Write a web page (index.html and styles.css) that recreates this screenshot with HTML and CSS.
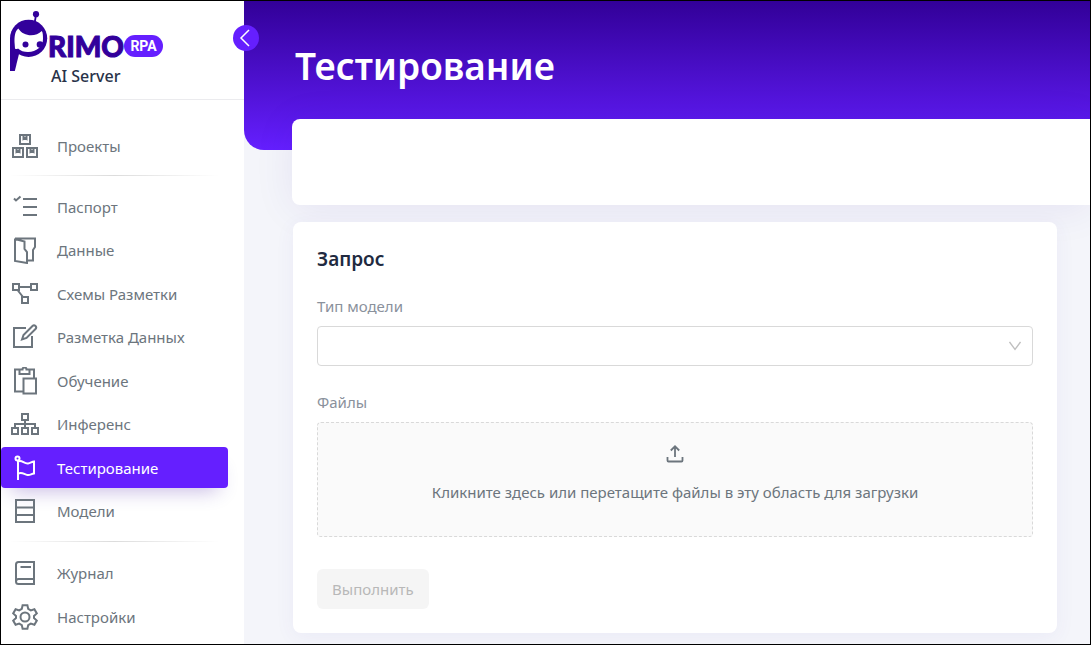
FILE: index.html
```html
<!DOCTYPE html>
<html lang="ru">
<head>
<meta charset="utf-8">
<title>Тестирование — AI Server</title>
<link rel="stylesheet" href="styles.css">
</head>
<body>
<aside class="sidebar">
  <div class="brand">
    <svg class="brand-head" viewBox="0 0 38 61" aria-hidden="true">
      <circle cx="26" cy="3.2" r="3.1" fill="#32009b"/>
      <path d="M26 4 24.6 12" stroke="#32009b" stroke-width="1.8"/>
      <circle cx="18.6" cy="27.300" r="18.6" fill="#32009b"/>
      <path d="M0 27V60H4.800L9.500 41Z" fill="#32009b"/>
      <path d="M8.300 17.500C4.800 20.500 4.500 25 4.500 31L5 37.500C6 38.500 7 38 8 37.500C10.500 40 14 41 18 41C26.500 41 33 35.500 33 28C33 24.500 33 22 31.800 20C26 26 13.500 26 8.300 17.500Z" fill="#fff"/>
      <circle cx="15.500" cy="33.500" r="3" fill="#32009b"/>
      <circle cx="30" cy="33.500" r="3.300" fill="#32009b"/>
    </svg>
    <div class="brand-text">
      <div class="brand-row"><span class="brand-name">RIMO</span><span class="brand-badge">RPA</span></div>
      <div class="brand-sub">AI Server</div>
    </div>
  </div>
  <button class="collapse" type="button" aria-label="Свернуть меню">
    <svg viewBox="0 0 26 26"><path d="M16 5 8 13l8 8"/></svg>
  </button>
  <nav class="nav">
    <div class="group">
      <a class="item" href="#"><svg class="icon" viewBox="0 0 28 28"><path d="M9 3h10v9H9zM2 16h10v9H2zM16 16h10v9H16zM12.500 3v4l1.500-1 1.500 1V3M5.500 16v4L7 19l1.500 1v-4M19.500 16v4l1.500-1 1.500 1v-4"/></svg>Проекты</a>
    </div>
    <hr class="rule">
    <div class="group group-main">
      <a class="item" href="#"><svg class="icon" viewBox="0 0 28 28"><path d="M3 5.500 5 7.500 9.500 3.500M12 6h14M12 14h14M12 22h14"/></svg>Паспорт</a>
      <a class="item" href="#"><svg class="icon" viewBox="0 0 28 28"><path d="M4 2.500h20v8.500l-2 3v10.500h-6M4 2.500v22.500l12 2v-11l-2.500-3V5.500L4 3"/></svg>Данные</a>
      <a class="item" href="#"><svg class="icon" viewBox="0 0 28 28"><path d="M2 4h6v6H2zM20 4h6v6h-6zM11 17h6v6h-6zM8 7h12M6.500 10l5.500 7"/></svg>Схемы Разметки</a>
      <a class="item" href="#"><svg class="icon" viewBox="0 0 28 28"><path d="M15 5H3v19h18V13M11 16.500l1.500-4.500 9-9q1.500-1.500 3 0t0 3l-9 9z"/></svg>Разметка Данных</a>
      <a class="item" href="#"><svg class="icon" viewBox="0 0 28 28"><path d="M12 24.500H4v-22h4.500M18.500 2.500H23v9M8.500 2.500V7h10V2.500h-3a2 2 0 0 0-4 0zM12.500 11.500H25v15H12.500z"/></svg>Обучение</a>
      <a class="item" href="#"><svg class="icon" viewBox="0 0 28 28"><path d="M11 4h6v6h-6zM1 18h6v6H1zM11 18h6v6h-6zM21 18h6v6h-6zM14 10v8M4 18v-4h20v4"/></svg>Инференс</a>
      <a class="item item-active" href="#" aria-current="page"><svg class="icon" viewBox="0 0 28 28"><circle cx="6.500" cy="4.500" r="2"/><path d="M7 6.500V26M7 7.500c4-2 6 2.500 10 2 2.500-.3 4-2 6-2v12c-3 .5-4 2-6.500 1.500-3.500-.5-5-3.500-9.500-1.500"/></svg>Тестирование</a>
      <a class="item" href="#"><svg class="icon" viewBox="0 0 28 28"><path d="M5 3h18v22H5zM5 10.500h18M5 18h18"/></svg>Модели</a>
    </div>
    <hr class="rule">
    <div class="group">
      <a class="item" href="#"><svg class="icon" viewBox="0 0 28 28"><path d="M23 20V3H7.500Q5 3 5 5.500v17Q5 25 7.500 25H23v-5H7.500Q5 20 5 22.500M9.500 8H20"/></svg>Журнал</a>
      <a class="item" href="#"><svg class="icon" viewBox="0 0 28 28"><circle cx="14" cy="14" r="4.500"/><path d="M11.600 2.200h4.800l.8 3.700 2.600 1.500 3.600-1.200 2.400 4.200-2.800 2.500v2.200l2.800 2.500-2.400 4.200-3.600-1.200-2.600 1.500-.8 3.700h-4.800l-.8-3.700-2.600-1.500-3.600 1.200-2.400-4.200 2.800-2.500v-2.200l-2.800-2.500 2.400-4.200 3.600 1.200 2.600-1.500z"/></svg>Настройки</a>
    </div>
  </nav>
</aside>
<main class="main">
  <header class="hero"><h1 class="title">Тестирование</h1></header>
  <div class="content">
    <section class="panel"></section>
    <form class="card">
      <h2 class="card-title">Запрос</h2>
      <label class="label" for="model">Тип модели</label>
      <div class="select-wrap">
        <select class="select" id="model"><option></option></select>
        <svg class="chevron" viewBox="0 0 12 10" aria-hidden="true"><path d="M.5 1 6 8.500 11.500 1"/></svg>
      </div>
      <label class="label" for="files">Файлы</label>
      <div class="drop">
        <input class="drop-input" id="files" type="file" multiple>
        <svg class="drop-icon" viewBox="0 0 18 18" aria-hidden="true"><path d="M9 12V2M4.800 5.500 9 1.300l4.200 4.200M1.500 12v3.500q0 1 1 1h13q1 0 1-1V12"/></svg>
        <span>Кликните здесь или перетащите файлы в эту область для загрузки</span>
      </div>
      <button class="submit" type="submit" disabled>Выполнить</button>
    </form>
  </div>
</main>
</body>
</html>
```

FILE: styles.css
```css
* { box-sizing: border-box; }

body {
  display: flex;
  min-height: 100vh;
  margin: 0;
  border: 1px solid #000;
  overflow-x: hidden;
  background: #f4f5fa;
  color: #6c757d;
  font: 15px/20px "Noto Sans", "Open Sans", sans-serif;
}

.sidebar {
  position: relative;
  display: flex;
  flex: none;
  flex-direction: column;
  width: 243px;
  background: #fff;
}

.brand {
  display: flex;
  height: 99px;
  padding: 10px 0 0 9px;
  border-bottom: 1px solid #ebebee;
}
.brand-head { width: 38px; height: 61px; }
.brand-text { padding-top: 22px; }
.brand-row { display: flex; align-items: center; height: 26px; }
.brand-name {
  color: #32009b;
  font: 900 28px/26px Lato, sans-serif;
  -webkit-text-stroke: 1px #32009b;
}
.brand-badge {
  width: 39px;
  height: 22px;
  border-radius: 11px;
  background: #651fff;
  color: #fff;
  font: bold 14px/22px Roboto, sans-serif;
  text-align: center;
}
.brand-sub { padding-left: 3px; color: #283248; font-size: 16px; font-weight: 500; line-height: 34px; }

.collapse {
  position: absolute;
  top: 24px;
  right: -15px;
  width: 26px;
  height: 26px;
  padding: 0;
  border: 0;
  border-radius: 50%;
  background: #651fff;
}
.collapse svg { display: block; fill: none; stroke: #fff; stroke-width: 1.5; }

.nav { display: flex; flex: 1; flex-direction: column; padding: 25px 16px 7px 0; }
.group { display: flex; flex-direction: column; gap: 3px; }
.group-main { flex: 1; justify-content: space-between; gap: 0; }
.rule {
  width: 210px;
  height: 1px;
  margin: 9px 0 10px 8px;
  border: 0;
  background: linear-gradient(90deg, transparent, #dcdcdc 50%, transparent);
}
.item {
  display: flex;
  align-items: center;
  gap: 18px;
  height: 41px;
  padding-left: 10px;
  color: #6c757d;
  text-decoration: none;
}
.item-active {
  border-radius: 4px;
  background: #651fff;
  box-shadow: 0 12px 20px -10px rgba(50, 0, 155, .3);
  color: #fff;
}
.icon { width: 28px; height: 28px; fill: none; stroke: currentColor; stroke-width: 2; }

.main { flex: 1; min-width: 0; }
.hero {
  height: 149px;
  padding: 37px 0 0 51px;
  border-bottom-left-radius: 20px;
  background: linear-gradient(#320098, #651fff);
}
.title { margin: 0; color: #fff; font-size: 37px; font-weight: 600; line-height: 56px; }
.content { position: relative; margin-top: -31px; padding-left: 48px; }
.panel {
  height: 86px;
  border-radius: 8px 0 0 8px;
  background: #fff;
  box-shadow: 0 4px 40px rgba(50, 0, 155, .08);
}
.card {
  position: relative;
  margin: 17px 33px 11px 1px;
  padding: 24px;
  border-radius: 8px;
  background: #fff;
  box-shadow: 0 4px 20px rgba(80, 70, 180, .06);
}
.card-title { margin: 0 0 24px; color: #212a40; font-size: 19px; font-weight: 600; line-height: 26px; }
.label { display: block; margin-bottom: 10px; color: #8a919c; }

.select-wrap { position: relative; margin-bottom: 26px; }
.select {
  display: block;
  width: 100%;
  height: 40px;
  border: 1px solid #d9d9d9;
  border-radius: 4px;
  background: #fff;
  appearance: none;
}
.chevron {
  position: absolute;
  top: 15px;
  right: 12px;
  width: 12px;
  height: 10px;
  fill: none;
  stroke: #bfbfbf;
  stroke-width: 1.3;
  pointer-events: none;
}

.drop {
  position: relative;
  display: flex;
  flex-direction: column;
  align-items: center;
  gap: 19px;
  height: 115px;
  margin-bottom: 32px;
  padding-top: 22px;
  border: 1px dashed #d9d9d9;
  border-radius: 4px;
  background: #fafafa;
}
.drop-input { position: absolute; inset: 0; width: 100%; height: 100%; opacity: 0; }
.drop-icon { width: 18px; height: 18px; fill: none; stroke: #6c757d; stroke-width: 1.8; }

.submit {
  display: block;
  height: 40px;
  padding: 0 15px;
  border: 0;
  border-radius: 6px;
  background: #f5f5f5;
  color: #b8b8b8;
  font: inherit;
}
```
